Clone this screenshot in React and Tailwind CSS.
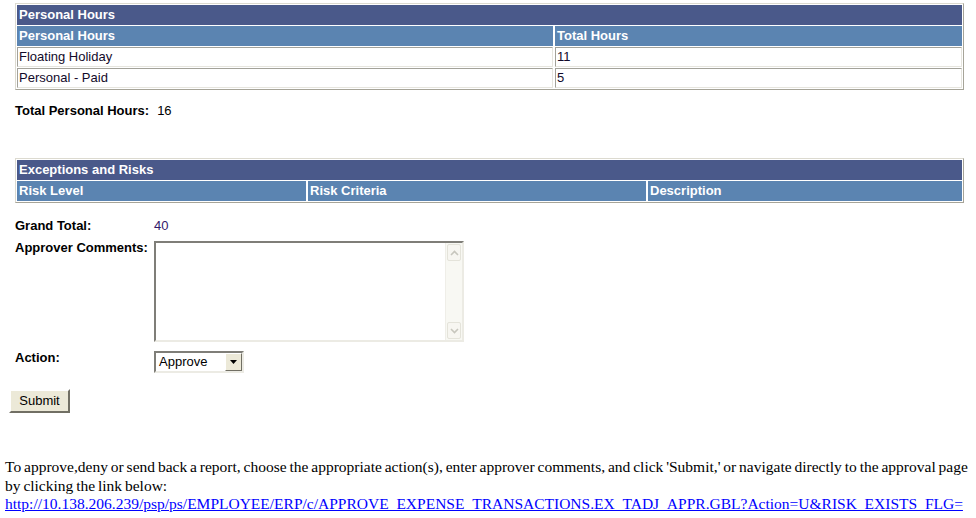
import React from 'react'

const sans = "font-['Liberation_Sans',Arial,Helvetica,sans-serif]"

const GridTable = ({ title, columns, rows, className }) => {
  return (
    <div className={`ml-[15px] w-[949px] border border-t-[#dcdad0] border-l-[#dcdad0] border-b-[#a6a498] border-r-[#a6a498] bg-white p-px flex flex-col gap-px ${className}`}>
      {/* title bar */}
      <div className="h-5 bg-[#4a598a] flex items-center px-[2px] text-white font-bold text-[13px]">{title}</div>
      {/* header row */}
      <div className="flex gap-[2px]">
        {columns.map((col) => (
          <div key={col.label} className={`h-5 bg-[#5b84b1] flex items-center px-[2px] text-white font-bold text-[13px] ${col.w}`}>
            {col.label}
          </div>
        ))}
      </div>
      {rows.map((row, i) => (
        <div key={i} className="flex gap-[2px]">
          {row.map((cell, j) => (
            <div key={j} className={`h-5 flex items-center px-px border border-t-[#a3a29a] border-l-[#a3a29a] border-b-[#e6e5de] border-r-[#e6e5de] text-[13px] text-[#120a2a] ${columns[j].w}`}>
              {cell}
            </div>
          ))}
        </div>
      ))}
    </div>
  )
}

const Chevron = ({ up }) => (
  <svg width="9" height="6" viewBox="0 0 9 6" className="text-[#c7c6bd]">
    <path d={up ? 'M1 5 L4.5 1.5 L8 5' : 'M1 1 L4.5 4.5 L8 1'} fill="none" stroke="currentColor" strokeWidth="1.6" />
  </svg>
)

const App = () => {
  return (
    <div className={`w-[976px] h-[518px] overflow-hidden bg-white text-black ${sans}`}>
      {/* Personal Hours */}
      <GridTable
        className="mt-[3px]"
        title="Personal Hours"
        columns={[
          { label: 'Personal Hours', w: 'w-[536px]' },
          { label: 'Total Hours', w: 'flex-1' },
        ]}
        rows={[
          ['Floating Holiday', '11'],
          ['Personal - Paid', '5'],
        ]}
      />

      <div className="ml-[15px] mt-[14px] h-[14px] flex items-center text-[13px]">
        <span className="font-bold">Total Personal Hours:</span>
        <span className="ml-[8px]">16</span>
      </div>

      {/* Exceptions and Risks */}
      <GridTable
        className="mt-[40px]"
        title="Exceptions and Risks"
        columns={[
          { label: 'Risk Level', w: 'w-[289px]' },
          { label: 'Risk Criteria', w: 'w-[338px]' },
          { label: 'Description', w: 'flex-1' },
        ]}
        rows={[]}
      />

      {/* Form */}
      <div className="ml-[15px] mt-4 grid grid-cols-[139px_auto] text-[13px]">
        <div className="h-[14px] flex items-center font-bold">Grand Total:</div>
        <div className="h-[14px] flex items-center text-[#33186b]">40</div>

        <div className="mt-2 h-[14px] flex items-center font-bold">Approver Comments:</div>
        <div className="mt-2 w-[310px] h-[101px] flex border-2 border-t-[#7f7e78] border-l-[#7f7e78] border-b-[#ecebe4] border-r-[#ecebe4] bg-white">
          <textarea className="flex-1 resize-none outline-none bg-white" />
          <div className="w-[17px] bg-[#f8f8f3] border-l border-[#efeee8] flex flex-col justify-between">
            <div className="h-[17px] m-px rounded-[2px] border border-[#e4e3da] bg-[#f7f6f1] flex items-center justify-center">
              <Chevron up />
            </div>
            <div className="h-[17px] m-px rounded-[2px] border border-[#e4e3da] bg-[#f7f6f1] flex items-center justify-center">
              <Chevron />
            </div>
          </div>
        </div>

        <div className="mt-[9px] h-[14px] flex items-center font-bold">Action:</div>
        <div className="mt-[9px] w-[90px] h-[22px] flex items-stretch border-2 border-t-[#7f7e78] border-l-[#7f7e78] border-b-[#ecebe4] border-r-[#ecebe4] bg-white">
          <div className="flex-1 flex items-center pl-[3px] text-[13px]">Approve</div>
          <div className="w-[17px] bg-[#ece9d8] border border-t-white border-l-white border-b-[#716f64] border-r-[#716f64] flex items-center justify-center">
            <svg width="7" height="4" viewBox="0 0 7 4">
              <path d="M0 0 L7 0 L3.5 4 Z" fill="#000" />
            </svg>
          </div>
        </div>
      </div>

      <div className="ml-[9px] mt-4 flex">
        <button className="w-[61px] h-6 bg-[#ece9d8] border-2 border-t-white border-l-white border-b-[#716f64] border-r-[#716f64] text-[13px] text-black">
          Submit
        </button>
      </div>

      {/* Footer note */}
      <div className="mt-[45px] pl-[5px] font-['Liberation_Serif','Times_New_Roman',serif] text-[15.5px] leading-[18.5px]">
        <p className="[word-spacing:-1px]">
          To approve,deny or send back a report, choose the appropriate action(s), enter approver comments, and click 'Submit,' or navigate directly to the approval page by clicking the link below:
        </p>
        <a href="#" className="text-[#0000ff] underline whitespace-nowrap">
          http://10.138.206.239/psp/ps/EMPLOYEE/ERP/c/APPROVE_EXPENSE_TRANSACTIONS.EX_TADJ_APPR.GBL?Action=U&amp;RISK_EXISTS_FLG=
        </a>
      </div>
    </div>
  )
}

export default App
